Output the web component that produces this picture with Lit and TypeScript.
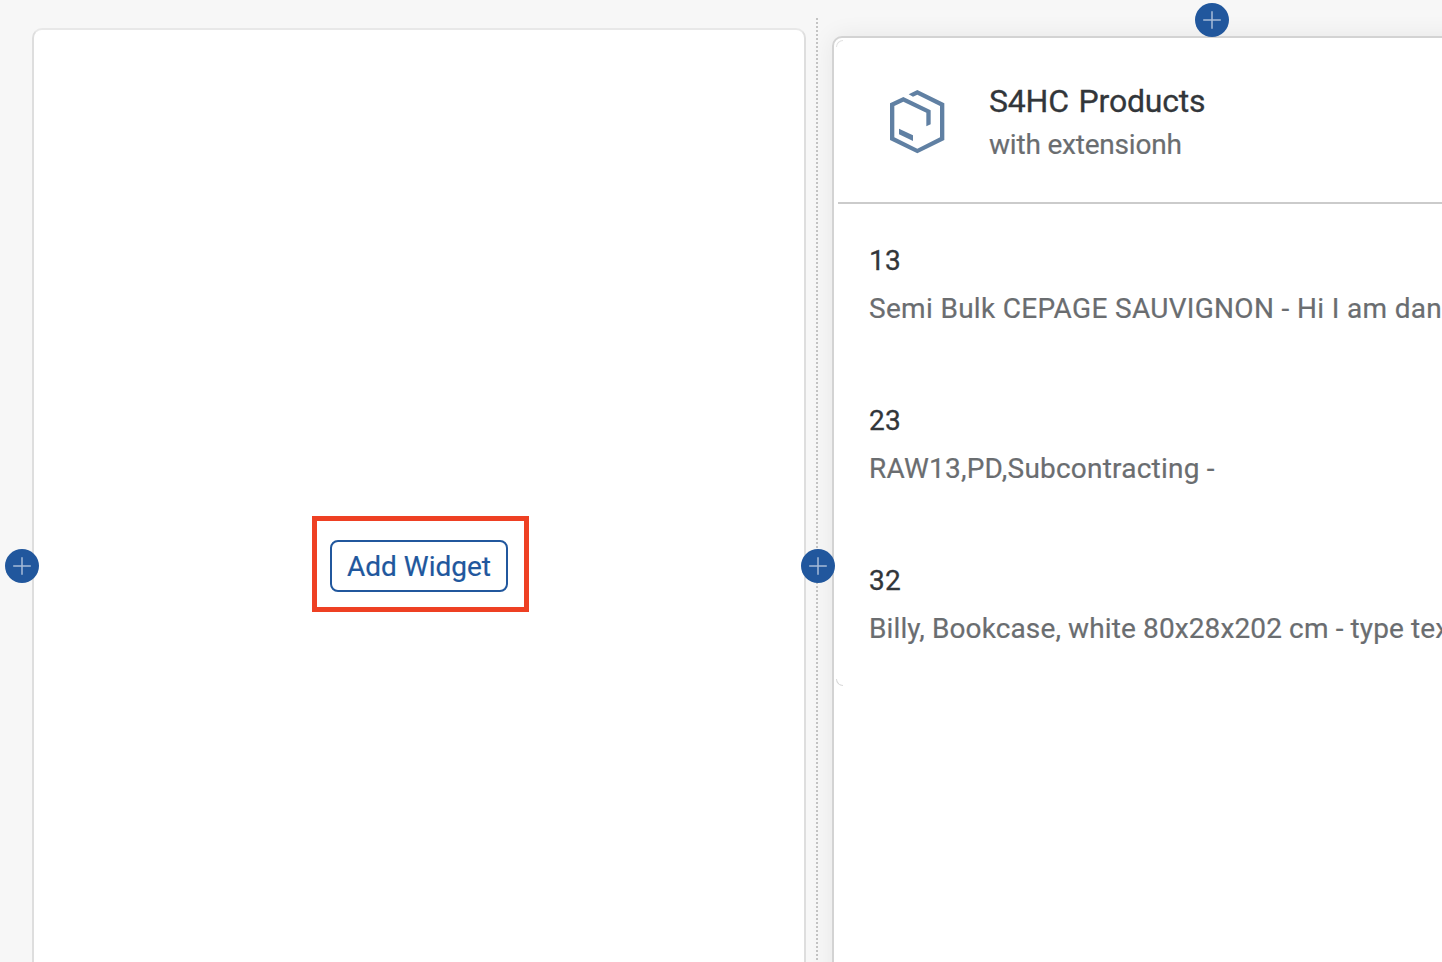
import { LitElement, html, css } from "lit";
import { customElement, property } from "lit/decorators.js";

@customElement("plus-badge")
class PlusBadge extends LitElement {
  static styles = css`
    :host { display: block; width: 34px; height: 34px; }
    svg { display: block; }
  `;
  render() {
    return html`<svg width="34" height="34" viewBox="0 0 34 34">
      <circle cx="17" cy="17" r="17" fill="#21579d" />
      <path d="M8.2 17H25.8M17 8.2V25.8" stroke="#a6bcd8" stroke-width="1.5" />
    </svg>`;
  }
}

@customElement("product-row")
class ProductRow extends LitElement {
  @property() number = "";
  @property() description = "";
  static styles = css`
    :host { display: block; height: 160px; white-space: nowrap; }
    .number { padding-top: 33px; line-height: 48px; font-size: 28px; color: #32363a; letter-spacing: 0.3px; -webkit-text-stroke: 0.3px #32363a; }
    .description { line-height: 48px; font-size: 28px; color: #6a6d70; letter-spacing: var(--track, 0px); word-spacing: var(--gap, 0px); -webkit-text-stroke: 0.2px #6a6d70; }
  `;
  render() {
    return html`<div class="number">${this.number}</div>
      <div class="description">${this.description}</div>`;
  }
}

@customElement("app-root")
class AppRoot extends LitElement {
  static styles = css`
    :host { display: block; font-family: Roboto, "Noto Sans", sans-serif; }
    * { box-sizing: border-box; }
    .page { position: relative; display: flex; align-items: flex-start; height: 962px; padding-left: 32px; overflow: hidden; background: #f7f7f7; }
    .slot { flex: none; display: flex; justify-content: center; width: 774px; height: 1076px; margin-top: 28px; align-items: center; border: 2px solid #dedede; border-top-color: #e8e8e8; border-radius: 10px; background: #fff; }
    .highlight { display: flex; width: 217px; height: 96px; padding: 20px 12px 0 13px; margin: -4px 0 0 3px; border: 5px solid #ee4023; }
    .add { width: 178px; height: 52px; padding: 2px 0 0; border: 2px solid #21579d; border-radius: 8px; background: #fff; color: #21579d; font: 28px/46px Roboto, "Noto Sans", sans-serif; -webkit-text-stroke: 0.2px #21579d; white-space: nowrap; margin-top: -1px; }
    .divider { flex: none; width: 2px; height: 944px; margin: 18px 14px 0 10px; background: repeating-linear-gradient(#c4c4c4 0 2px, transparent 2px 4px); }
    .card { flex: none; width: 760px; height: 1076px; margin-top: 36px; padding-left: 4px; border: 2px solid #d3d3d3; border-radius: 10px; background: #fff; box-shadow: 0 0 24px rgba(0, 0, 0, 0.07); }
    .divider, .card { position: relative; }
    .corner { position: absolute; left: 2px; width: 7px; height: 7px; }
    .corner-top { top: 2px; border-top: 1px solid #e2e2e2; border-left: 1px solid #e2e2e2; border-radius: 7px 0 0 0; }
    .corner-bottom { top: 641px; border-bottom: 1px solid #d8d8d8; border-left: 1px solid #d8d8d8; border-radius: 0 0 0 7px; }
    .header { display: flex; height: 166px; padding: 34px 0 0 32px; border-bottom: 2px solid #cbcbcb; }
    .logo { display: block; width: 100px; height: 100px; margin-top: -2px; }
    .titles { margin-left: 19px; padding-top: 6px; white-space: nowrap; }
    .title { height: 46px; line-height: 46px; font-size: 32px; color: #32363a; letter-spacing: -0.2px; word-spacing: 2px; -webkit-text-stroke: 0.3px #32363a; }
    .subtitle { height: 42px; line-height: 42px; font-size: 28px; color: #6a6d70; letter-spacing: -0.2px; -webkit-text-stroke: 0.2px #6a6d70; }
    .rows { padding-left: 31px; }
    .wide { --track: 0.3px; --gap: 0.1px; }
    .medium { --track: 0.22px; }
    .narrow { --track: 0.12px; }
    .badge { position: absolute; }
    .left { left: 5px; top: 549px; }
    .middle { left: 801px; top: 549px; }
    .top { left: 1195px; top: 3px; }
  `;
  render() {
    return html`<main class="page">
      <section class="slot">
        <div class="highlight"><button class="add">Add Widget</button></div>
      </section>
      <div class="divider"></div>
      <section class="card">
        <i class="corner corner-top"></i><i class="corner corner-bottom"></i>
        <header class="header">
          <svg class="logo" viewBox="0 0 300 300" fill="#6080a3">
            <path d="M116 73L142 60L223 100V210L142 250L60 210V100L100 81L182 121V163L169 169V128L100 95L73 108V202L142 236L210 202V108L142 74L129 80Z" />
            <path d="M87 176L129 196V213L87 193Z" />
          </svg>
          <div class="titles">
            <div class="title">S4HC Products</div>
            <div class="subtitle">with extensionh</div>
          </div>
        </header>
        <div class="rows">
          <product-row class="wide" number="13" description="Semi Bulk CEPAGE SAUVIGNON - Hi I am dan"></product-row>
          <product-row class="medium" number="23" description="RAW13,PD,Subcontracting -"></product-row>
          <product-row class="narrow" number="32" description="Billy, Bookcase, white 80x28x202 cm - type tex"></product-row>
        </div>
      </section>
      <plus-badge class="badge left"></plus-badge>
      <plus-badge class="badge middle"></plus-badge>
      <plus-badge class="badge top"></plus-badge>
    </main>`;
  }
}
